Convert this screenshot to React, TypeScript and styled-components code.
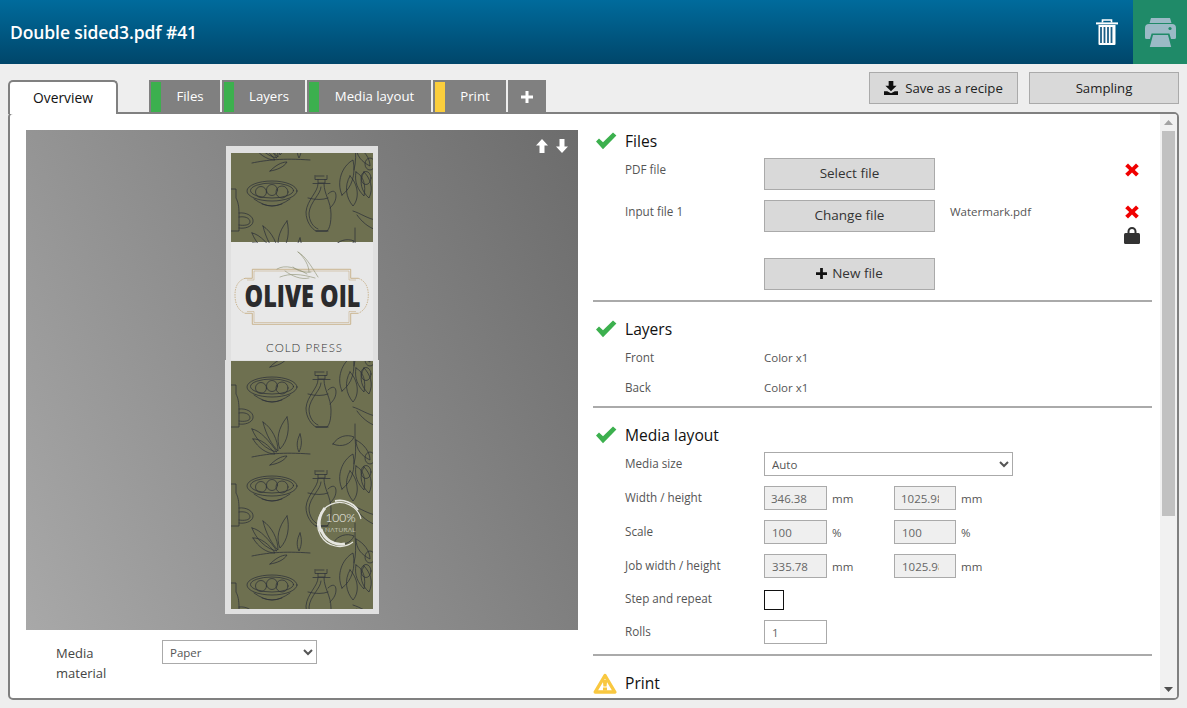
import React from 'react';
import styled, { createGlobalStyle } from 'styled-components';

const Global = createGlobalStyle`
  html, body { margin: 0; padding: 0; height: 100%; overflow: hidden; background: #eeeeee; }
  body { font-family: "Open Sans", "Noto Sans", "Liberation Sans", sans-serif; }
  * { box-sizing: border-box; }
`;

const Page = styled.div`
  width: 1187px;
  height: 708px;
  display: flex;
  flex-direction: column;
  background: #eeeeee;
`;

const Header = styled.header`
  height: 64px;
  display: flex;
  align-items: center;
  background: linear-gradient(to bottom, #006b9c, #00466a);
`;
const Title = styled.h1`
  flex: 1;
  margin: 0 0 0 10px;
  color: #fff;
  font-size: 17.5px;
  font-weight: 600;
  letter-spacing: -0.1px;
`;
const TrashBox = styled.div`
  width: 22px;
  height: 26px;
  margin-right: 15px;
`;
const PrintBlock = styled.div`
  width: 54px;
  height: 64px;
  background: #1f8a68;
  display: flex;
  align-items: center;
  justify-content: center;
`;

const TopBar = styled.div`
  height: 48px;
  display: flex;
  justify-content: space-between;
  padding: 8px 8px 0;
`;
const TabStrip = styled.nav`
  display: flex;
  align-items: flex-start;
  padding-top: 8px;
  gap: 2px;
  position: relative;
  z-index: 1;
  height: 42px;
`;
const ActiveTab = styled.div`
  width: 110px;
  height: 34px;
  margin-right: 29px;
  background: #fff;
  border: 2px solid #808080;
  border-bottom: none;
  border-radius: 5px 5px 0 0;
  color: #111;
  font-size: 13.8px;
  line-height: 31px;
  text-align: center;
`;
const Tab = styled.div<{ $w: number }>`
  width: ${p => p.$w}px;
  height: 34px;
  display: flex;
  background: #808080;
  color: #fff;
  font-size: 13.2px;
  line-height: 33px;
`;
const TabMark = styled.span<{ $c: string }>`
  width: 10px;
  margin: 2px 0 2px 2px;
  background: ${p => p.$c};
`;
const TabText = styled.span`
  flex: 1;
  text-align: center;
  padding-right: 1px;
`;
const PlusTab = styled.div`
  width: 38px;
  height: 34px;
  background: #808080;
  display: flex;
  align-items: center;
  justify-content: center;
`;
const Actions = styled.div`
  display: flex;
  gap: 11px;
`;
const ActionButton = styled.button<{ $w: number }>`
  width: ${p => p.$w}px;
  height: 32px;
  padding: 0 0 1px;
  display: flex;
  align-items: center;
  justify-content: center;
  gap: 7px;
  background: #d9d9d9;
  border: 1px solid #aaaaaa;
  color: #222;
  font-family: inherit;
  font-size: 13.2px;
`;

const Panel = styled.main`
  height: 588px;
  margin: 0 8px;
  display: flex;
  background: #fff;
  border: 2px solid #808080;
  border-radius: 5px;
  overflow: hidden;
`;
const LeftPane = styled.section`
  width: 583px;
  padding: 16px 15px 0 16px;
`;
const Preview = styled.div`
  height: 500px;
  position: relative;
  display: flex;
  align-items: center;
  justify-content: center;
  background: linear-gradient(62deg, #a8a8a8, #6c6c6c);
`;
const Arrows = styled.div`
  position: absolute;
  top: 9px;
  right: 10px;
  display: flex;
  gap: 8px;
`;
const MaterialRow = styled.div`
  display: flex;
  margin-top: 10px;
  padding-left: 30px;
`;
const MaterialLabel = styled.div`
  width: 106px;
  padding-top: 3px;
  font-size: 13px;
  line-height: 20px;
  color: #444;
`;
const RightPane = styled.section`
  width: 559px;
  margin-right: 8px;
  overflow: hidden;
`;
const Section = styled.div<{ $pb: number; $last?: boolean }>`
  padding: 15px 0 ${p => p.$pb}px;
  border-bottom: ${p => (p.$last ? 'none' : '2px solid #aaaaaa')};
`;
const Heading = styled.h2`
  display: flex;
  align-items: center;
  height: 24px;
  margin: 0 0 5px;
  font-size: 15.6px;
  font-weight: 400;
  color: #111;
`;
const HeadIcon = styled.span`
  width: 32px;
  display: flex;
`;
const Rows = styled.div<{ $gap: number }>`
  display: flex;
  flex-direction: column;
  gap: ${p => p.$gap}px;
`;
const Row = styled.div<{ $h?: number; $mt?: number }>`
  display: grid;
  grid-template-columns: 139px 171px 1fr 20px;
  padding: 0 10px 0 32px;
  min-height: 24px;
  height: ${p => (p.$h ? `${p.$h}px` : 'auto')};
  margin-top: ${p => p.$mt ?? 0}px;
  align-items: start;
`;
const FieldRow = styled.div<{ $h?: number; $mt?: number }>`
  display: flex;
  align-items: center;
  height: ${p => p.$h ?? 24}px;
  margin-top: ${p => p.$mt ?? 0}px;
  padding-left: 32px;
`;
const Label = styled.div`
  width: 139px;
  padding-bottom: 2px;
  font-size: 11.7px;
  line-height: 22px;
  color: #555;
`;
const Value = styled.div`
  font-size: 11.5px;
  line-height: 24px;
  color: #555;
`;
const FileName = styled(Value)`
  padding-left: 15px;
`;
const FileButton = styled.button`
  width: 171px;
  height: 32px;
  padding: 0 0 2px;
  display: flex;
  align-items: center;
  justify-content: center;
  gap: 5px;
  background: #d9d9d9;
  border: 1px solid #aaaaaa;
  color: #333;
  font-family: inherit;
  font-size: 13.5px;
`;
const RowIcons = styled.div`
  display: flex;
  flex-direction: column;
  align-items: center;
  gap: 8px;
  padding-top: 5px;
`;
const Select = styled.select<{ $w: number }>`
  width: ${p => p.$w}px;
  height: 24px;
  padding: 0 0 0 3px;
  background: #fff;
  border: 1px solid #aaaaaa;
  border-radius: 0;
  color: #555;
  font-family: inherit;
  font-size: 11.5px;
`;
const FieldGroup = styled.div`
  width: 130px;
  display: flex;
  align-items: center;
  gap: 5px;
`;
const NumberInput = styled.input<{ $w?: number; $pl?: number }>`
  width: ${p => p.$w ?? 63}px;
  height: 24px;
  padding: 0 16px 0 ${p => p.$pl ?? 7}px;
  background: ${p => (p.disabled ? '#efefef' : '#fff')};
  border: 1px solid #aaaaaa;
  border-radius: 0;
  color: #666;
  font-family: inherit;
  font-size: 11.5px;
  opacity: 1;
  &:disabled { color: #666; }
`;
const Unit = styled.span`
  font-size: 11.5px;
  color: #555;
`;
const CheckBox = styled.span`
  width: 20px;
  height: 20px;
  margin-top: 2px;
  border: 1px solid #111;
  background: #fff;
`;
const Scrollbar = styled.div`
  width: 17px;
  display: flex;
  flex-direction: column;
  background: #f1f1f1;
`;
const ScrollButton = styled.div<{ $down?: boolean }>`
  height: 17px;
  flex: none;
  display: flex;
  justify-content: center;
  align-items: center;
  margin-top: ${p => (p.$down ? 'auto' : '0')};
  color: ${p => (p.$down ? '#505050' : '#a3a3a3')};
`;
const ScrollThumb = styled.div`
  width: 13px;
  height: 385px;
  margin-left: 2px;
  background: #c1c1c1;
`;
const CheckGlyph = styled.svg`
  margin-top: -1px;
`;

const Check = () => (
  <CheckGlyph width="27" height="18" viewBox="0 0 27 18">
    <path d="M3 9.6 6 6.6 10 10.2 20 .4 23.4 3.6 10 17.2Z" fill="#3cb04e" />
  </CheckGlyph>
);
const Warning = () => (
  <svg width="24" height="21" viewBox="0 0 24 21">
    <path d="M12 2.500 21.800 19H2.200Z" fill="#fff" stroke="#f9c840" strokeWidth="3.400" strokeLinejoin="round" />
    <path d="M9.800 7h4.400l-.6 6.500h-3.200zM10 14.500h4v3h-4z" fill="#f9c840" />
  </svg>
);
const Cross = () => (
  <svg width="14" height="14" viewBox="0 0 14 14">
    <path d="M3 .6 7 4.400 11 .6 13.800 3.200 9.800 7 13.800 10.800 11 13.400 7 9.600 3 13.400.2 10.800 4.200 7 .2 3.200Z" fill="#f00000" />
  </svg>
);
const Lock = () => (
  <svg width="16" height="17" viewBox="0 0 16 17">
    <path d="M3.500 7V4.500a4.500 4.500 0 0 1 9 0V7h-2V4.500a2.500 2.500 0 0 0-5 0V7Z" fill="#333" />
    <rect x="0" y="6" width="16" height="11" rx="1.500" fill="#333" />
  </svg>
);
const Plus = ({ s, c }: { s: number; c: string }) => (
  <svg width={s} height={s} viewBox="0 0 12 12">
    <path d="M4.500 0h3v4.500H12v3H7.500V12h-3V7.500H0v-3h4.500Z" fill={c} />
  </svg>
);
const SaveIcon = () => (
  <svg width="14" height="14" viewBox="0 0 15 15">
    <path d="M5 0h5v5h3.500L7.500 11 1.500 5H5ZM0 11h3.500l4 2.200 4-2.200H15v4H0Z" fill="#111" />
  </svg>
);
const ArrowUp = () => (
  <svg width="12" height="14" viewBox="0 0 12 14">
    <path d="M6 0 12 6.500H8.500V14h-5V6.500H0Z" fill="#fff" />
  </svg>
);
const ArrowDown = () => (
  <svg width="12" height="14" viewBox="0 0 12 14">
    <path d="M3.500 0h5v7.500H12L6 14 0 7.500h3.500Z" fill="#fff" />
  </svg>
);
const Trash = () => (
  <svg width="22" height="26" viewBox="0 0 22 26">
    <path d="M6.500 3.500V1h9v2.500" fill="none" stroke="#fff" strokeWidth="1.600" />
    <rect x="0" y="3.400" width="22" height="2" fill="#fff" />
    <path d="M2.500 6h17v19a1 1 0 0 1-1 1h-15a1 1 0 0 1-1-1Z" fill="#fff" />
    <path d="M5 8v16M8.500 8v16M12 8v16M15.500 8v16" stroke="#1d5f86" strokeWidth="1.800" />
  </svg>
);
const Printer = () => (
  <svg width="31" height="29" viewBox="0 0 31 29">
    <path d="M6 0h19l1.500 5h-22Z" fill="#9bbac6" />
    <path d="M4 6h23a4 4 0 0 1 4 4v9.500a1.500 1.500 0 0 1-1.500 1.500H26l-1.600-5.500H6.600L5 21H1.500A1.500 1.500 0 0 1 0 19.500V10a4 4 0 0 1 4-4Z" fill="#9bbac6" />
    <circle cx="25" cy="10.500" r="1.600" fill="#1f8a68" />
    <path d="M8 17h15l3.200 12H4.800Z" fill="#9bbac6" />
  </svg>
);
const Tri = ({ down }: { down?: boolean }) => (
  <svg width="9" height="5" viewBox="0 0 9 5">
    <path d={down ? 'M0 0h9L4.500 5Z' : 'M4.500 0 9 5H0Z'} fill="currentColor" />
  </svg>
);

const OliveCell = ({ y }: { y: number }) => (
  <g transform={`translate(47 ${y})`} fill="none" stroke="#2e323a" strokeWidth="0.75" strokeLinecap="round">
    {/* bowl */}
    <ellipse cx="0" cy="-1" rx="25" ry="10" />
    <ellipse cx="0" cy="-1.500" rx="21.500" ry="7.500" />
    <circle cx="-11" cy="0" r="5.500" />
    <circle cx="0" cy="-2" r="5.500" />
    <circle cx="10" cy="0" r="6" />
    <path d="M-18 7Q-8 14 0 14T18 7M-10 12Q0 16 10 12" />
    {/* jug */}
    <path d="M44-16H52M43-16.500V-12.500H55V-16.500M46-12.500V-9H53V-12.500M41-8.500H58" />
    <path d="M46-8C46 0 35 8 34 20 34 30 40 37 44 39H55C58 36 59 30 59 22 59 10 52 2 52-8" />
    <path d="M49-5C49 2 38 10 37 21 37 29 41 35 46 37M36 6Q48 9 56 6" />
    <path d="M56 2C60-2 64-2 64 4 64 10 60 14 58 16" />
    <path d="M44 39H56" strokeWidth="1" />
    {/* cup fragment */}
    <path d="M-41-3H-36V6C-34 10-33 14-33 22V39H-41M-33 21C-26 20-18 24-19 30-20 35-28 37-33 36M-33 25C-27 24-22 26-22 30-22 33-28 34-33 33" />
    {/* branch */}
    <path d="M-20 69C-5 66 10 64 38 66M-2 77C3 72 9 68 15 68 12 73 5 76-2 77Z" strokeWidth="0.8" />
    <path d="M-9 34C-6 47 0 57 6 63 6 52 0 40-9 34ZM-20 41C-12 42-2 54 5 64-6 62-16 52-20 41ZM-19 51C-12 50-2 58 3 66-5 66-14 60-19 51ZM15 29C6 40 4 52 8 61 16 53 18 40 15 29ZM28 46C25 52 24 58 27 64 30 58 30 52 28 46Z" />
    {/* right leaves */}
    <path d="M83 36V49C84 60 84 68 82 76M61 56C66 48 75 46 82 49 79 56 70 60 61 56ZM70 101C64 88 70 72 81 66 84 80 80 94 70 101ZM84 52C92 56 98 64 98 72 90 68 84 62 84 52ZM84 78C92 82 94 92 92 102 86 96 82 88 84 78Z" />
    <ellipse cx="94" cy="84" rx="5" ry="6.500" />
    <ellipse cx="98" cy="70" rx="5" ry="6" />
    <path d="M81 19C88 21 96 27 104 28M85 23C90 30 96 35 104 38" />
    <path d="M78 -16C72-6 74 6 81 14 88 6 86-8 78-16ZM92-20C86-10 90 0 97 6 102-4 98-14 92-20Z" />
  </g>
);

const Artwork = () => (
  <svg width="154" height="468" viewBox="0 0 154 468" role="img" aria-label="Olive oil label">
    <defs>
      <clipPath id="topClip"><rect x="6" y="7" width="142" height="90" /></clipPath>
      <clipPath id="botClip"><rect x="6" y="215" width="142" height="248" /></clipPath>
    </defs>
    <rect x="1" y="0" width="152" height="215" fill="#e0e0e0" />
    <rect x="0" y="214" width="154" height="254" fill="#e0e0e0" />
    <rect x="6" y="7" width="142" height="90" fill="#6e7050" />
    <rect x="6" y="215" width="142" height="248" fill="#6e7050" />
    <rect x="6" y="96" width="142" height="118" fill="#e8e8e8" />
    <g clipPath="url(#topClip)">
      <OliveCell y={-52} />
      <OliveCell y={46} />
    </g>
    <g clipPath="url(#botClip)">
      <OliveCell y={144} />
      <OliveCell y={242} />
      <OliveCell y={341} />
      <OliveCell y={440} />
    </g>
    <g fill="none" stroke="#c2a77a" strokeWidth="0.8">
      <path d="M20 132.300H27.300V123.300H125.700V132.300H133.300M133.300 167.300H125.700V178.300H27.300V167.300H20" />
      <path d="M29 125H124V134H131M131 165.500H124V176.500H29V165.500H22M22 134H29V125" strokeWidth="0.5" />
      <path d="M20 132.300C12 135 10 142 10 149 10 156 12 164 20 167.300M133.300 132.300C141 135 143.300 142 143.300 149 143.300 156 141 164 133.300 167.300" strokeDasharray="1.500 1" />
    </g>
    <g fill="none" stroke="#8b8e70" strokeWidth="0.6" strokeLinecap="round">
      <path d="M73 106C80 110 85 118 93 131M52 123C60 118 72 122 82 128M55 131C65 127 76 128 90 132M73 106C80 112 84 120 84 126M68 121C72 125 80 127 86 126M60 125C67 130 76 134 84 132" />
    </g>
    <text transform="translate(19.500 160.500) scale(0.78 1)" fontFamily="'Open Sans', sans-serif" fontWeight="800" fontSize="30" fill="#2b2b2d">OLIVE OIL</text>
    <text x="41" y="205.500" fontFamily="Lato, sans-serif" fontWeight="300" fontSize="11.500" letterSpacing="1" fill="#333">COLD PRESS</text>
    <path d="M136 373A22 22 0 1 0 128 396" fill="none" stroke="#e6e6e0" strokeWidth="1.200" />
    <path d="M96 383A21 21 0 0 0 120 398 M100 362A23 23 0 0 0 96 386" fill="none" stroke="#e6e6e0" strokeWidth="2.800" />
    <path d="M110 355A22 22 0 0 1 133 364" fill="none" stroke="#e6e6e0" strokeWidth="1.800" />
    <text x="115.500" y="375.500" textAnchor="middle" fontFamily="Lato, sans-serif" fontWeight="300" fontSize="12" fill="#f0f0ea">100%</text>
    <text x="115.500" y="385.500" textAnchor="middle" fontFamily="Lato, sans-serif" fontWeight="300" fontSize="6.500" letterSpacing="0.3" fill="#f0f0ea">NATURAL</text>
  </svg>
);

export default function App() {
  return (
    <Page>
      <Global />
      <Header>
        <Title>Double sided3.pdf #41</Title>
        <TrashBox><Trash /></TrashBox>
        <PrintBlock><Printer /></PrintBlock>
      </Header>
      <TopBar>
        <TabStrip>
          <ActiveTab>Overview</ActiveTab>
          <Tab $w={71}><TabMark $c="#3cb04e" /><TabText>Files</TabText></Tab>
          <Tab $w={83}><TabMark $c="#3cb04e" /><TabText>Layers</TabText></Tab>
          <Tab $w={124}><TabMark $c="#3cb04e" /><TabText>Media layout</TabText></Tab>
          <Tab $w={73}><TabMark $c="#fbce3c" /><TabText>Print</TabText></Tab>
          <PlusTab><Plus s={12} c="#fff" /></PlusTab>
        </TabStrip>
        <Actions>
          <ActionButton $w={149}><SaveIcon />Save as a recipe</ActionButton>
          <ActionButton $w={150}>Sampling</ActionButton>
        </Actions>
      </TopBar>
      <Panel>
        <LeftPane>
          <Preview>
            <Artwork />
            <Arrows><ArrowUp /><ArrowDown /></Arrows>
          </Preview>
          <MaterialRow>
            <MaterialLabel>Media<br />material</MaterialLabel>
            <Select $w={155} defaultValue="Paper"><option>Paper</option></Select>
          </MaterialRow>
        </LeftPane>
        <RightPane>
          <Section $pb={10}>
            <Heading><HeadIcon><Check /></HeadIcon>Files</Heading>
            <Rows $gap={10}>
              <Row>
                <Label>PDF file</Label>
                <FileButton>Select file</FileButton>
                <span />
                <RowIcons><Cross /></RowIcons>
              </Row>
              <Row $h={50}>
                <Label>Input file 1</Label>
                <FileButton>Change file</FileButton>
                <FileName>Watermark.pdf</FileName>
                <RowIcons><Cross /><Lock /></RowIcons>
              </Row>
            </Rows>
            <Row $mt={8}>
              <span />
              <FileButton><Plus s={11} c="#111" />New file</FileButton>
            </Row>
          </Section>
          <Section $pb={6}>
            <Heading><HeadIcon><Check /></HeadIcon>Layers</Heading>
            <Rows $gap={6}>
              <FieldRow><Label>Front</Label><Value>Color x1</Value></FieldRow>
              <FieldRow><Label>Back</Label><Value>Color x1</Value></FieldRow>
            </Rows>
          </Section>
          <Section $pb={10}>
            <Heading><HeadIcon><Check /></HeadIcon>Media layout</Heading>
            <Rows $gap={10}>
              <FieldRow>
                <Label>Media size</Label>
                <Select $w={249} defaultValue="Auto"><option>Auto</option></Select>
              </FieldRow>
              <FieldRow>
                <Label>Width / height</Label>
                <FieldGroup><NumberInput disabled value="346.38" readOnly $pl={6} /><Unit>mm</Unit></FieldGroup>
                <FieldGroup><NumberInput disabled value="1025.98" readOnly $w={62} $pl={6} /><Unit>mm</Unit></FieldGroup>
              </FieldRow>
              <FieldRow>
                <Label>Scale</Label>
                <FieldGroup><NumberInput disabled value="100" readOnly /><Unit>%</Unit></FieldGroup>
                <FieldGroup><NumberInput disabled value="100" readOnly $w={62} /><Unit>%</Unit></FieldGroup>
              </FieldRow>
              <FieldRow>
                <Label>Job width / height</Label>
                <FieldGroup><NumberInput disabled value="335.78" readOnly /><Unit>mm</Unit></FieldGroup>
                <FieldGroup><NumberInput disabled value="1025.98" readOnly $w={62} /><Unit>mm</Unit></FieldGroup>
              </FieldRow>
              <FieldRow $h={22}>
                <Label>Step and repeat</Label>
                <CheckBox />
              </FieldRow>
            </Rows>
            <FieldRow $mt={10}>
              <Label>Rolls</Label>
              <NumberInput defaultValue="1" $pl={7} />
            </FieldRow>
          </Section>
          <Section $pb={0} $last>
            <Heading><HeadIcon><Warning /></HeadIcon>Print</Heading>
          </Section>
        </RightPane>
        <Scrollbar>
          <ScrollButton><Tri /></ScrollButton>
          <ScrollThumb />
          <ScrollButton $down><Tri down /></ScrollButton>
        </Scrollbar>
      </Panel>
    </Page>
  );
}
